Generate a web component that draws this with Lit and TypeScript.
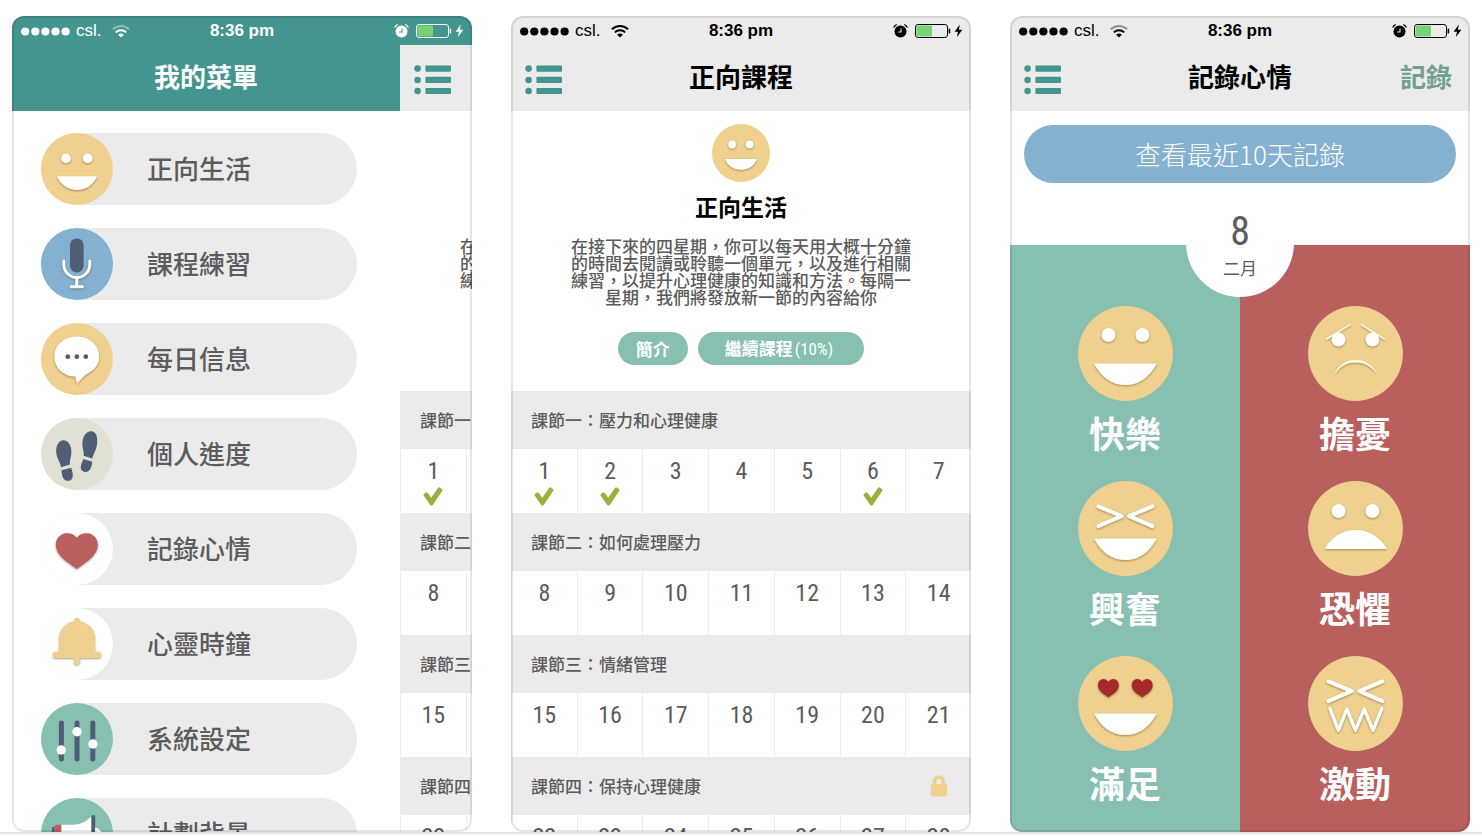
import { LitElement, html, svg, css, nothing } from "lit";
import { customElement, property } from "lit/decorators.js";
import { classMap } from "lit/directives/class-map.js";

const shared = css`
  :host {
    --teal: #44948f;
    --green: #87bfb0;
    --red: #b9605e;
    --blue: #84b1d0;
    --sand: #efd08f;
    --grey: #ebebeb;
    --ink: #5c5c5c;
    --navy: #505e75;
    --digits: "Roboto Condensed", "Liberation Sans Narrow", "Liberation Sans", sans-serif;
    box-sizing: border-box;
  }
  *,
  *::before,
  *::after {
    box-sizing: border-box;
  }
  button {
    appearance: none;
    border: 0;
    margin: 0;
    padding: 0;
    background: none;
    color: inherit;
    font: inherit;
    cursor: pointer;
  }
  svg {
    display: block;
    flex: none;
  }
  h1,
  h2,
  h3,
  p,
  ul {
    margin: 0;
    padding: 0;
    list-style: none;
  }
  .raised {
    filter: drop-shadow(0 1px 1px rgba(70, 50, 10, 0.45));
  }
  .bar {
    display: grid;
    grid-template-columns: 1fr auto 1fr;
    align-items: center;
    height: 66px;
    padding: 0 14px;
    background: var(--grey);
    color: #000;
  }
  .bar h1,
  .action {
    padding-bottom: 4px;
    font-size: 26px;
    line-height: 38px;
    font-weight: 700;
  }
  .bar h1 {
    grid-column: 2;
  }
  .list {
    grid-column: 1;
    justify-self: start;
    padding-top: 3px;
  }
  .action {
    justify-self: end;
    padding-right: 4px;
    color: #72a090;
  }
`;

const listIcon = svg`
  <svg width="38" height="30" viewBox="0 0 38 30" fill="#44948f">
    <circle cx="3.6" cy="3.6" r="3.3" /><circle cx="3.6" cy="15" r="3.3" /><circle cx="3.6" cy="26" r="3.3" />
    <rect x="11.4" y="0.5" width="25.6" height="6.2" rx="1" />
    <rect x="11.4" y="11.8" width="25.6" height="6.2" rx="1" />
    <rect x="11.4" y="22.9" width="25.6" height="6.2" rx="1" />
  </svg>`;

const checkIcon = svg`
  <svg width="20" height="20" viewBox="0 0 20 20" fill="#95b43c">
    <path d="M0.6 8.6 Q0.2 7.4 1.4 6.6 L3 5.6 Q4.2 5.2 5 6.2 L8.2 10.8 L15 0.9 Q15.8 0 16.8 0.5 L19 1.9 Q19.9 2.7 19.3 3.8 L10.2 17.4 Q8.4 19.4 6.8 17.4 Z" />
  </svg>`;

const lockIcon = svg`
  <svg width="18" height="22" viewBox="0 0 18 22">
    <path d="M4.6 10 V6.4 a4.4 4.4 0 0 1 8.8 0 V10" fill="none" stroke="#efd08f" stroke-width="3.6" />
    <rect x="0.8" y="9" width="16.4" height="12.6" rx="2.4" fill="#efd08f" />
  </svg>`;

const smile = (size: number) => svg`
  <svg width=${size} height=${size} viewBox="0 0 72 72">
    <circle cx="36" cy="36" r="36" fill="#efd08f" />
    <g class="raised" fill="#fff">
      <circle cx="25" cy="25.4" r="4.9" /><circle cx="46.7" cy="25.4" r="4.9" />
      <path d="M16 43.3 H56 A21.4 21.4 0 0 1 16 43.3 Z" />
    </g>
  </svg>`;

const disc = (fill: string, body: unknown) => svg`
  <svg width="72" height="72" viewBox="0 0 72 72">
    <circle cx="36" cy="36" r="36" fill=${fill} />${body}
  </svg>`;

const micIcon = disc("#84b1d0", svg`
  <rect x="29" y="10.4" width="13.6" height="34" rx="6.6" fill="#505e75" />
  <g class="raised" fill="none" stroke="#fff" stroke-width="3" stroke-linecap="round">
    <path d="M22.8 33 V36.6 a13 13 0 0 0 26 0 V33 M35.8 50 V58 M30.2 58.8 H41.4" />
  </g>`);

const chatIcon = disc("#efd08f", svg`
  <path class="raised" fill="#fff" d="M35.8 13.4 C48.6 13.4 58.2 22 58.2 33.4 C58.2 40.6 54.4 46.6 47.4 50 C43.6 52.4 39.6 56 36.4 60.8 C35.2 58.4 34.6 56 34.4 53.6 C22 53.2 13.4 44.6 13.4 33.4 C13.4 22 23 13.4 35.8 13.4 Z" />
  <g fill="#505e75"><circle cx="26.8" cy="33.7" r="2.4" /><circle cx="35.8" cy="33.7" r="2.4" /><circle cx="44.8" cy="33.7" r="2.4" /></g>`);

const stepsIcon = disc("#e0e1d2", svg`
  <g fill="#505e75">
    <path d="M22.2 22.2 C27 22 30.6 27.4 30.4 34 C30.2 39.4 28.4 42.2 29 46.6 L20 49.2 C19.6 44.2 15.4 40.4 15.2 33.4 C15 27.2 18 22.4 22.2 22.2 Z" />
    <path d="M20.4 52.2 L30.2 49.8 C31.4 53.4 32.4 57 31.4 60 C30.4 63.2 25.2 64 22.8 61 C21.2 58.8 20.6 55.2 20.4 52.2 Z" />
    <path d="M50.4 13.2 C54.6 13.4 56.8 18 56.2 25 C55.6 32.4 52.4 35.4 51.2 40.6 L42.6 37.8 C43.4 33.4 41 30 41.4 24.4 C41.8 17.8 45.8 13 50.4 13.2 Z" />
    <path d="M42.4 41 L51.2 43.8 C51 47.4 50 51 47.6 53 C45 54.8 40.6 54 39.8 50.6 C39.4 47.8 41 43.8 42.4 41 Z" />
  </g>`);

const heartIcon = disc("#fff", svg`
  <path class="raised" fill="#b9605e" d="M35.8 24.8 C38.4 21.4 42 20 46 20.2 C52.2 20.6 57 25.4 56.8 32.4 C56.4 42.4 46 48.4 35.8 56 C25.6 48.4 15.2 42.4 14.8 32.4 C14.6 25.4 19.4 20.6 25.6 20.2 C29.6 20 33.2 21.4 35.8 24.8 Z" />`);

const bellIcon = disc("#fff", svg`
  <g class="raised" fill="#efd08f">
    <rect x="33" y="9.8" width="5.8" height="10" rx="2.9" />
    <path d="M18 45 V30.8 a18 17.6 0 0 1 36 0 V45 Z" />
    <rect x="11.8" y="43.8" width="48.4" height="6.2" rx="3" />
    <rect x="33" y="46" width="5.8" height="10.6" rx="2.9" />
  </g>`);

const slidersIcon = disc("#87bfb0", svg`
  <path d="M20.4 20 V56 M36 20 V56 M51.8 20 V56" stroke="#505e75" stroke-width="5" stroke-linecap="round" />
  <g fill="#fff"><circle cx="20.2" cy="47" r="4.7" /><circle cx="36" cy="28.7" r="4.7" /><circle cx="51.9" cy="41" r="4.7" /></g>`);

const hornIcon = disc("#87bfb0", svg`
  <rect x="11" y="29" width="4" height="18" fill="#505e75" />
  <path d="M15 26.7 H20.4 V50 H12.8 V29 Z" fill="#b9605e" />
  <path d="M20.4 26.7 H33 C41 26.4 46 23 50.4 18.6 V58 C46 53.6 41 50.4 33 50 H20.4 Z" fill="#fff" />
  <rect x="50.4" y="17" width="3.8" height="42" rx="1.9" fill="#505e75" />
  <path d="M54.2 29.6 a8.6 8.6 0 0 1 0 17 Z" fill="#fff" />`);

@customElement("status-bar")
export class StatusBar extends LitElement {
  @property({ type: Boolean }) weak = false;

  static styles = [
    shared,
    css`
      :host {
        display: grid;
        grid-template-columns: 1fr auto 1fr;
        align-items: center;
        flex: none;
        height: 29px;
        padding: 1px 8px 0;
        font-family: "Liberation Sans", Arial, sans-serif;
        font-size: 17px;
        line-height: 20px;
      }
      .side {
        display: flex;
        align-items: center;
      }
      .carrier {
        padding: 0 10px 0 6px;
      }
      .time {
        font-weight: 700;
      }
      .end {
        justify-content: flex-end;
        gap: 7px;
      }
      .power {
        display: flex;
        align-items: center;
        gap: 3px;
      }
    `,
  ];

  render() {
    return html`
      <div class="side">
        <svg width="50" height="9" viewBox="0 0 50 9" fill="currentColor">
          ${[0, 1, 2, 3, 4].map((i) => svg`<circle cx=${5.2 + i * 10.1} cy="4.5" r="4.1" />`)}
        </svg>
        <span class="carrier">csl.</span>
        <svg width="18" height="13" viewBox="0 0 18 13" fill="none" stroke="currentColor" stroke-width="2">
          <path d="M0.9 4.3 C5.4 -0.1 12.6 -0.1 17.1 4.3" opacity=${this.weak ? 0.4 : 1} />
          <path d="M3.8 7.4 C6.8 4.5 11.2 4.5 14.2 7.4" />
          <path d="M9 12.6 L6.1 9.7 C7.8 8.2 10.2 8.2 11.9 9.7 Z" fill="currentColor" stroke="none" />
        </svg>
      </div>
      <span class="time">8:36 pm</span>
      <div class="side end">
        <svg width="15" height="14" viewBox="0 0 15 14">
          <circle cx="7.5" cy="7.4" r="6" fill="currentColor" />
          <path d="M0.8 3.2 A7 7 0 0 1 3.4 0.8 M14.2 3.2 A7 7 0 0 0 11.6 0.8" stroke="currentColor" stroke-width="1.2" fill="none" stroke-linecap="round" />
          <path d="M8 4.4 V8 H5.2" stroke="var(--face)" stroke-width="1.1" fill="none" />
        </svg>
        <div class="power">
          <svg width="36" height="14" viewBox="0 0 36 14">
            <rect x="0.5" y="0.5" width="32" height="13" rx="2.6" fill="none" stroke="currentColor" />
            <rect x="1.4" y="1.4" width="15.6" height="11.2" rx="1.4" fill="#76d572" />
            <path d="M33.6 4.6 h0.6 a1 1 0 0 1 1 1 v2.8 a1 1 0 0 1 -1 1 h-0.6 Z" fill="currentColor" />
          </svg>
          <svg width="9" height="14" viewBox="0 0 9 14" fill="currentColor"><path d="M5.8 0.6 L0.6 7.8 H4 L2.8 13.2 L8.4 5.8 H4.9 Z" /></svg>
        </div>
      </div>
    `;
  }
}

interface Lesson {
  title: string;
  first: number;
  done?: number[];
  locked?: boolean;
}

const lessons: Lesson[] = [
  { title: "課節一：壓力和心理健康", first: 1, done: [1, 2, 6] },
  { title: "課節二：如何處理壓力", first: 8 },
  { title: "課節三：情緒管理", first: 15 },
  { title: "課節四：保持心理健康", first: 22, locked: true },
];

@customElement("course-page")
export class CoursePage extends LitElement {
  static styles = [
    shared,
    css`
      :host {
        display: block;
        background: #fff;
        color: var(--ink);
      }
      .intro {
        display: flex;
        flex-direction: column;
        align-items: center;
        padding: 13px 57px 26px;
        text-align: center;
      }
      h2 {
        margin-top: 10px;
        font-size: 23px;
        line-height: 28px;
        font-weight: 700;
        color: #000;
      }
      p {
        margin-top: 17px;
        font-size: 17px;
        line-height: 17px;
        font-weight: 500;
      }
      .actions {
        display: flex;
        gap: 10px;
        margin-top: 27px;
      }
      .actions button {
        height: 33px;
        padding: 0 18px;
        border-radius: 17px;
        background: var(--green);
        color: #fff;
        font-size: 17px;
        line-height: 32px;
        font-weight: 700;
      }
      .actions .wide {
        padding: 0 31px 0 27px;
      }
      .wide span {
        padding-left: 2px;
        font-family: var(--digits);
        font-weight: 400;
      }
      .lesson {
        display: flex;
        align-items: center;
        justify-content: space-between;
        height: 58px;
        padding: 0 23px 0 20px;
        background: var(--grey);
      }
      h3 {
        font-size: 17px;
        line-height: 24px;
        font-weight: 500;
      }
      .days {
        display: grid;
        grid-template-columns: repeat(7, 1fr);
      }
      .day {
        display: flex;
        flex-direction: column;
        align-items: center;
        gap: 4px;
        height: 64px;
        padding-top: 10px;
        border-left: 1px solid var(--grey);
        font-family: var(--digits);
        font-size: 24px;
        line-height: 24px;
      }
    `,
  ];

  render() {
    return html`
      <header class="bar">
        <button class="list" aria-label="選單">${listIcon}</button>
        <h1>正向課程</h1>
      </header>
      <section class="intro">
        ${smile(58)}
        <h2>正向生活</h2>
        <p>在接下來的四星期，你可以每天用大概十分鐘的時間去閱讀或聆聽一個單元，以及進行相關練習，以提升心理健康的知識和方法。每隔一星期，我們將發放新一節的內容給你</p>
        <div class="actions">
          <button>簡介</button>
          <button class="wide">繼續課程<span>(10%)</span></button>
        </div>
      </section>
      ${lessons.map(
        (l) => html`
          <section>
            <div class="lesson">
              <h3>${l.title}</h3>
              ${l.locked ? lockIcon : nothing}
            </div>
            <div class="days">
              ${Array.from({ length: 7 }, (_, i) => l.first + i).map(
                (n) => html`<button class="day">
                  <span>${n}</span>${l.done?.includes(n) ? checkIcon : nothing}
                </button>`
              )}
            </div>
          </section>
        `
      )}
    `;
  }
}

const menu: { label: string; icon: unknown }[] = [
  { label: "正向生活", icon: smile(72) },
  { label: "課程練習", icon: micIcon },
  { label: "每日信息", icon: chatIcon },
  { label: "個人進度", icon: stepsIcon },
  { label: "記錄心情", icon: heartIcon },
  { label: "心靈時鐘", icon: bellIcon },
  { label: "系統設定", icon: slidersIcon },
  { label: "計劃背景", icon: hornIcon },
];

@customElement("side-menu")
export class SideMenu extends LitElement {
  static styles = [
    shared,
    css`
      :host {
        display: block;
        background: #fff;
        color: var(--ink);
      }
      .bar {
        background: var(--teal);
        color: #fff;
      }
      ul {
        display: flex;
        flex-direction: column;
        gap: 23px;
        padding: 22px 43px 0 29px;
      }
      .item {
        display: flex;
        align-items: center;
        gap: 34px;
        width: 100%;
        height: 72px;
        border-radius: 36px;
        background: var(--grey);
        font-size: 26px;
        line-height: 34px;
        font-weight: 500;
        text-align: left;
      }
      .item span {
        padding-bottom: 2px;
      }
    `,
  ];

  render() {
    return html`
      <header class="bar"><h1>我的菜單</h1></header>
      <ul>
        ${menu.map((m) => html`<li><button class="item">${m.icon}<span>${m.label}</span></button></li>`)}
      </ul>
    `;
  }
}

const face = (body: unknown) => svg`
  <svg width="95" height="95" viewBox="0 0 95 95">
    <circle cx="47.5" cy="47.5" r="47.4" fill="#efd08f" />
    <g class="raised" fill="#fff">${body}</g>
  </svg>`;

const eyes = (y: number) => svg`<circle cx="30.5" cy=${y} r="7" /><circle cx="64.4" cy=${y} r="7" />`;
const grin = svg`<path d="M16 57.4 H78.8 C72 71 61 79 47.4 79 C33.8 79 22.8 71 16 57.4 Z" />`;
const squint = svg`<path d="M20.4 25.4 L43.6 35.2 L20.4 45.2 M74.4 25.4 L51.2 35.2 L74.4 45.2" fill="none" stroke="#fff" stroke-width="4" stroke-linecap="round" stroke-linejoin="round" />`;
const heartPath = "M0 -6.4 C1.6 -8.8 3.8 -9.6 6 -9.2 C9 -8.6 10.6 -5.8 10.4 -2.6 C10 3 4.6 5.6 0 9 C-4.6 5.6 -10 3 -10.4 -2.6 C-10.6 -5.8 -9 -8.6 -6 -9.2 C-3.8 -9.6 -1.6 -8.8 0 -6.4 Z";

const goodMoods = [
  { label: "快樂", icon: face(svg`${eyes(29)}${grin}`) },
  { label: "興奮", icon: face(svg`${squint}${grin}`) },
  {
    label: "滿足",
    icon: face(svg`
      <g fill="#a62a2a"><path transform="translate(30.4 32.4)" d=${heartPath} /><path transform="translate(64.2 32.4)" d=${heartPath} /></g>
      ${grin}`),
  },
];

const badMoods = [
  {
    label: "擔憂",
    icon: face(svg`
      <path d="M18.6 33 L42 18.6 M53.2 18.6 L76.6 33" stroke="#fff8e6" stroke-width="1.6" stroke-linecap="round" />
      ${eyes(33.6)}
      <path fill="#fff8e6" d="M24.6 71 C30 59 38 53.6 47.6 53.6 C57.4 53.6 65.6 59 71.2 71 C64.6 60.8 57 56.4 47.6 56.4 C38.4 56.4 31 60.8 24.6 71 Z" />`),
  },
  {
    label: "恐懼",
    icon: face(svg`${eyes(30)}<path d="M16.6 68 C22.6 56.4 34 49 47.6 49 C61.2 49 72.8 56.4 79 68 Z" />`),
  },
  {
    label: "激動",
    icon: face(svg`${squint}
      <path d="M22 52.6 L30.4 74.4 L38.8 53 L47.5 74.4 L56.2 53 L65 74.4 L73.8 52.6" fill="none" stroke="#fff" stroke-width="3.4" stroke-linecap="round" stroke-linejoin="round" />`),
  },
];

@customElement("mood-page")
export class MoodPage extends LitElement {
  static styles = [
    shared,
    css`
      :host {
        display: flex;
        flex-direction: column;
        background: #fff;
        color: var(--ink);
      }
      .bar {
        flex: none;
      }
      .recent {
        flex: none;
        height: 58px;
        margin: 14px 14px 0;
        border-radius: 29px;
        background: var(--blue);
        color: #fff;
        font-size: 26px;
        line-height: 58px;
        font-weight: 300;
      }
      .date {
        display: flex;
        flex-direction: column;
        flex: none;
        align-items: center;
        align-self: center;
        gap: 4px;
        width: 108px;
        height: 108px;
        margin: 6px 0 -52px;
        padding-top: 23px;
        border-radius: 50%;
        background: #fff;
        z-index: 1;
      }
      .number {
        font-family: var(--digits);
        font-size: 40px;
        line-height: 40px;
      }
      .month {
        font-size: 17px;
        line-height: 24px;
      }
      .moods {
        display: grid;
        grid-template-columns: 1fr 1fr;
        flex: 1;
      }
      .column {
        display: flex;
        flex-direction: column;
        align-items: center;
        gap: 31px;
        padding-top: 61px;
      }
      .good {
        background: var(--green);
      }
      .bad {
        background: var(--red);
      }
      .mood {
        display: flex;
        flex-direction: column;
        align-items: center;
        gap: 13px;
        color: #fff;
        font-size: 36px;
        line-height: 36px;
        font-weight: 700;
      }
    `,
  ];

  private column(kind: string, moods: { label: string; icon: unknown }[]) {
    return html`<div class=${classMap({ column: true, [kind]: true })}>
      ${moods.map((m) => html`<button class="mood">${m.icon}<span>${m.label}</span></button>`)}
    </div>`;
  }

  render() {
    return html`
      <header class="bar">
        <button class="list" aria-label="選單">${listIcon}</button>
        <h1>記錄心情</h1>
        <button class="action">記錄</button>
      </header>
      <button class="recent">查看最近10天記錄</button>
      <div class="date"><span class="number">8</span><span class="month">二月</span></div>
      <div class="moods">${this.column("good", goodMoods)}${this.column("bad", badMoods)}</div>
    `;
  }
}

@customElement("app-root")
export class AppRoot extends LitElement {
  static styles = [
    shared,
    css`
      :host {
        display: flex;
        flex-direction: column;
        height: 100vh;
        padding-bottom: 2px;
        background: #fff;
        font-family: "Noto Sans CJK TC", sans-serif;
      }
      .gallery {
        display: grid;
        grid-template-columns: repeat(3, minmax(0, 1fr));
        gap: 39px;
        flex: 1;
        min-height: 0;
        padding: 16px 12px 0;
      }
      .shot {
        position: relative;
        display: flex;
        flex-direction: column;
        min-height: 0;
        border-radius: 12px;
        overflow: hidden;
        background: #fff;
      }
      .shot::after {
        content: "";
        position: absolute;
        inset: 0;
        z-index: 2;
        border: 2px solid rgba(0, 0, 0, 0.1);
        border-radius: 12px;
        pointer-events: none;
      }
      status-bar {
        --face: #ebebeb;
        background: var(--grey);
        color: #000;
      }
      .dark {
        --face: #44948f;
        background: var(--teal);
        color: #fff;
      }
      .slid {
        display: flex;
        flex: 1;
        min-height: 0;
        overflow: hidden;
      }
      .slid side-menu {
        flex: none;
        width: calc(100% - 72px);
      }
      .slid course-page {
        flex: none;
        width: 100%;
      }
      mood-page {
        flex: 1;
      }
      hr {
        width: 100%;
        height: 2px;
        margin: 0;
        border: 0;
        background: #e4e4e4;
      }
    `,
  ];

  render() {
    return html`
      <main class="gallery" lang="zh-Hant">
        <article class="shot">
          <status-bar class="dark" weak></status-bar>
          <div class="slid"><side-menu></side-menu><course-page></course-page></div>
        </article>
        <article class="shot">
          <status-bar></status-bar>
          <course-page></course-page>
        </article>
        <article class="shot">
          <status-bar weak></status-bar>
          <mood-page></mood-page>
        </article>
      </main>
      <hr />
    `;
  }
}
